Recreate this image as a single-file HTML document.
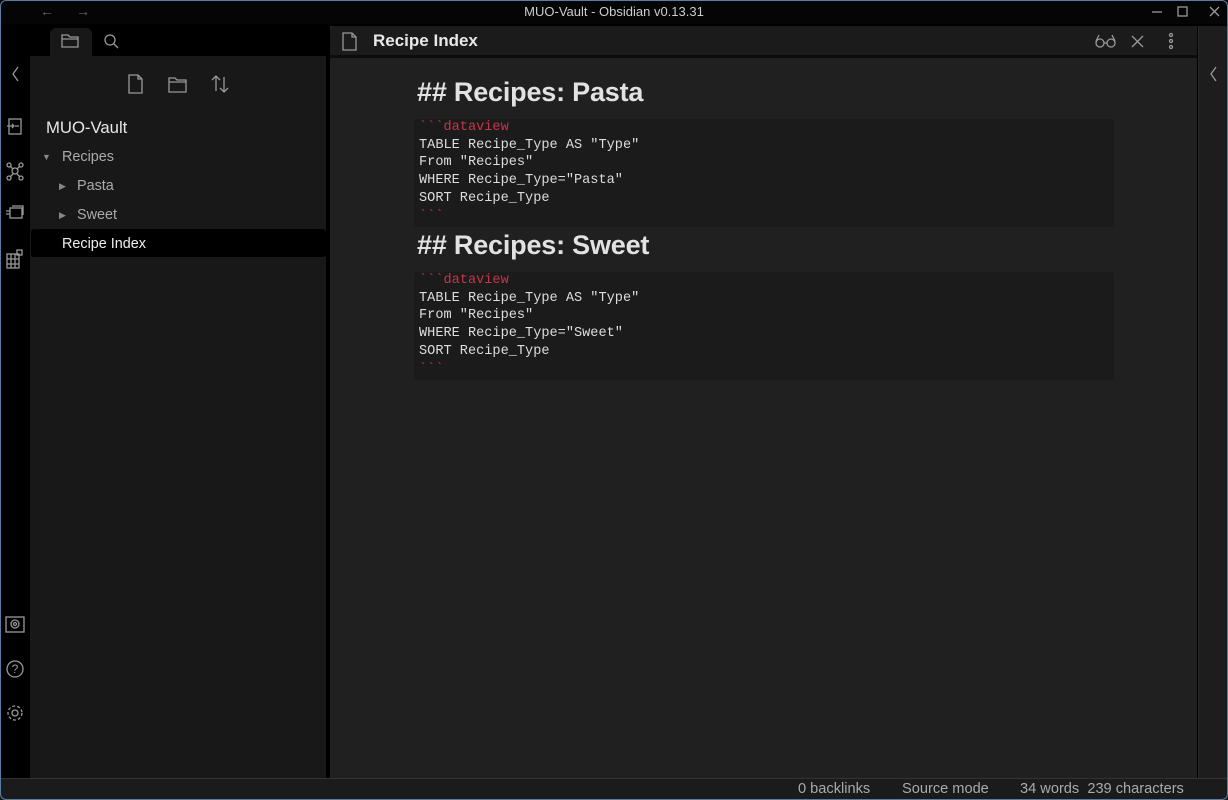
<!DOCTYPE html>
<html><head><style>
*{margin:0;padding:0;box-sizing:border-box}
body{width:1228px;height:800px;background:#000;font-family:"Liberation Sans",sans-serif;position:relative;overflow:hidden;color:#ddd}
.abs{position:absolute}
svg{position:absolute;fill:none;stroke:#999;stroke-width:1.3}
.mono{font-family:"Liberation Mono",monospace;font-size:13.6px;color:#ddd;line-height:17.7px}
.red{color:#c8344a}
.h{font-size:27px;font-weight:bold;color:#e2e2e2;letter-spacing:-0.2px}
</style></head><body>
<div class="abs" style="left:0;top:0;width:1228px;height:800px;border:1px solid #5a7ea3;border-radius:6px;pointer-events:none;z-index:9"></div>
<div class="abs" style="left:0;top:0;width:1228px;height:24px;background:#050505"></div>
<div class="abs" style="left:0;top:4px;width:1228px;text-align:center;font-size:13px;color:#ccc">MUO-Vault - Obsidian v0.13.31</div>
<div class="abs" style="left:40px;top:3px;font-size:14px;color:#666">&larr;</div>
<div class="abs" style="left:76px;top:3px;font-size:14px;color:#666">&rarr;</div>
<svg style="left:1148px;top:5px" width="80" height="14"><path d="M4 7h10"/><rect x="30" y="2" width="9" height="9"/><path d="M62 2l9 9M71 2l-9 9"/></svg>
<svg style="left:5px;top:60px" width="20" height="680">
<path d="M13 7l-5 7 5 7"/>
<rect x="4" y="59" width="12" height="15"/><path d="M2 66h6M7 64l2 2-2 2M10 66h4"/>
<circle cx="10" cy="111" r="3"/><circle cx="4" cy="105" r="2"/><circle cx="16" cy="105" r="2"/><circle cx="4" cy="118" r="2"/><circle cx="16" cy="118" r="2"/><path d="M5 106l3 3M15 106l-3 3M5 117l3-3M15 117l-3-3"/>
<rect x="5" y="148" width="12" height="10"/><path d="M7 146h11v9M1 151h4M1 154h4"/>
<rect x="2" y="194" width="12" height="14"/><path d="M2 199h12M2 204h12M6 194v14M10 194v14"/><rect x="12" y="190" width="5" height="5"/>
<rect x="1" y="557" width="18" height="15"/><circle cx="10" cy="564" r="4"/><circle cx="10" cy="564" r="1.5"/>
<circle cx="10" cy="609" r="8"/>
<circle cx="10" cy="653" r="3"/><circle cx="10" cy="653" r="7" stroke-dasharray="3 2"/>
</svg>
<div class="abs" style="left:6px;top:662px;width:18px;text-align:center;font-size:12px;color:#999">?</div>
<div class="abs" style="left:50px;top:28px;width:42px;height:30px;background:#181818;border-radius:6px 6px 0 0"></div>
<svg style="left:60px;top:31px" width="70" height="20"><path d="M2 4h6l2 2h8v10H2z M2 8h16"/><circle cx="50" cy="9" r="5"/><path d="M54 13l4 4"/></svg>
<div class="abs" style="left:30px;top:56px;width:296px;height:722px;background:#181818"></div>
<svg style="left:125px;top:72px" width="110" height="24"><path d="M4 3h9l4 4v14H4z M13 3v4h4"/><path d="M44 6h6l2 2h9v12H44z M44 10h17"/><path d="M91 4v15M87 8l4-4 4 4M99 20V5M95 16l4 4 4-4"/></svg>
<div class="abs" style="left:46px;top:118px;font-size:16.7px;color:#e6e6e6">MUO-Vault</div>
<div class="abs" style="left:42px;top:152px;font-size:9px;color:#888">&#9660;</div>
<div class="abs" style="left:62px;top:149px;font-size:14.4px;color:#aaa">Recipes</div>
<div class="abs" style="left:59px;top:181px;font-size:9px;color:#888">&#9654;</div>
<div class="abs" style="left:77px;top:178px;font-size:14.4px;color:#aaa">Pasta</div>
<div class="abs" style="left:59px;top:210px;font-size:9px;color:#888">&#9654;</div>
<div class="abs" style="left:77px;top:207px;font-size:14.4px;color:#aaa">Sweet</div>
<div class="abs" style="left:31px;top:229px;width:295px;height:28px;background:#000;border-radius:3px"></div>
<div class="abs" style="left:62px;top:236px;font-size:14.4px;color:#eee">Recipe Index</div>
<div class="abs" style="left:330px;top:26px;width:867px;height:752px;background:#202020"></div>
<div class="abs" style="left:330px;top:26px;width:867px;height:32px;background:#1b1b1b;border-bottom:3px solid #0c0c0c;border-radius:5px 5px 0 0"></div>
<svg style="left:340px;top:31px" width="20" height="20"><path d="M3 2h9l4 4v13H3z M12 2v4h4"/></svg>
<div class="abs" style="left:373px;top:31px;font-size:17px;font-weight:bold;color:#e8e8e8">Recipe Index</div>
<svg style="left:1094px;top:31px" width="90" height="20"><circle cx="6" cy="12" r="4"/><circle cx="17" cy="12" r="4"/><path d="M10 12h3M2 10l3-6M21 10l-3-6"/><path d="M38 5l11 11M49 5l-11 11"/><circle cx="77" cy="4" r="1.5"/><circle cx="77" cy="10" r="1.5"/><circle cx="77" cy="16" r="1.5"/></svg>
<div class="abs h" style="left:417px;top:77px">## Recipes: Pasta</div>
<div class="abs" style="left:414px;top:119px;width:700px;height:108px;background:#1b1b1b;border-radius:3px"></div>
<div class="abs mono" style="left:419px;top:119px"><span class="red">&#96;&#96;&#96;dataview</span><br>TABLE Recipe_Type AS "Type"<br>From "Recipes"<br>WHERE Recipe_Type="Pasta"<br>SORT Recipe_Type<br><span class="red">&#96;&#96;&#96;</span></div>
<div class="abs h" style="left:417px;top:230px">## Recipes: Sweet</div>
<div class="abs" style="left:414px;top:272px;width:700px;height:108px;background:#1b1b1b;border-radius:3px"></div>
<div class="abs mono" style="left:419px;top:272px"><span class="red">&#96;&#96;&#96;dataview</span><br>TABLE Recipe_Type AS "Type"<br>From "Recipes"<br>WHERE Recipe_Type="Sweet"<br>SORT Recipe_Type<br><span class="red">&#96;&#96;&#96;</span></div>
<div class="abs" style="left:1198px;top:26px;width:30px;height:752px;background:#1d1d1d;border-left:1px solid #2a2a2a"></div>
<svg style="left:1206px;top:64px" width="14" height="20"><path d="M10 3l-5 7 5 7"/></svg>
<div class="abs" style="left:0;top:778px;width:1228px;height:22px;background:#1b1b1b;border-top:1px solid #333"></div>
<div class="abs" style="left:798px;top:781px;font-size:14.6px;color:#aaa">0 backlinks</div>
<div class="abs" style="left:902px;top:781px;font-size:14.6px;color:#aaa">Source mode</div>
<div class="abs" style="left:1020px;top:781px;font-size:14.6px;color:#aaa">34 words&nbsp; 239 characters</div>
</body></html>
